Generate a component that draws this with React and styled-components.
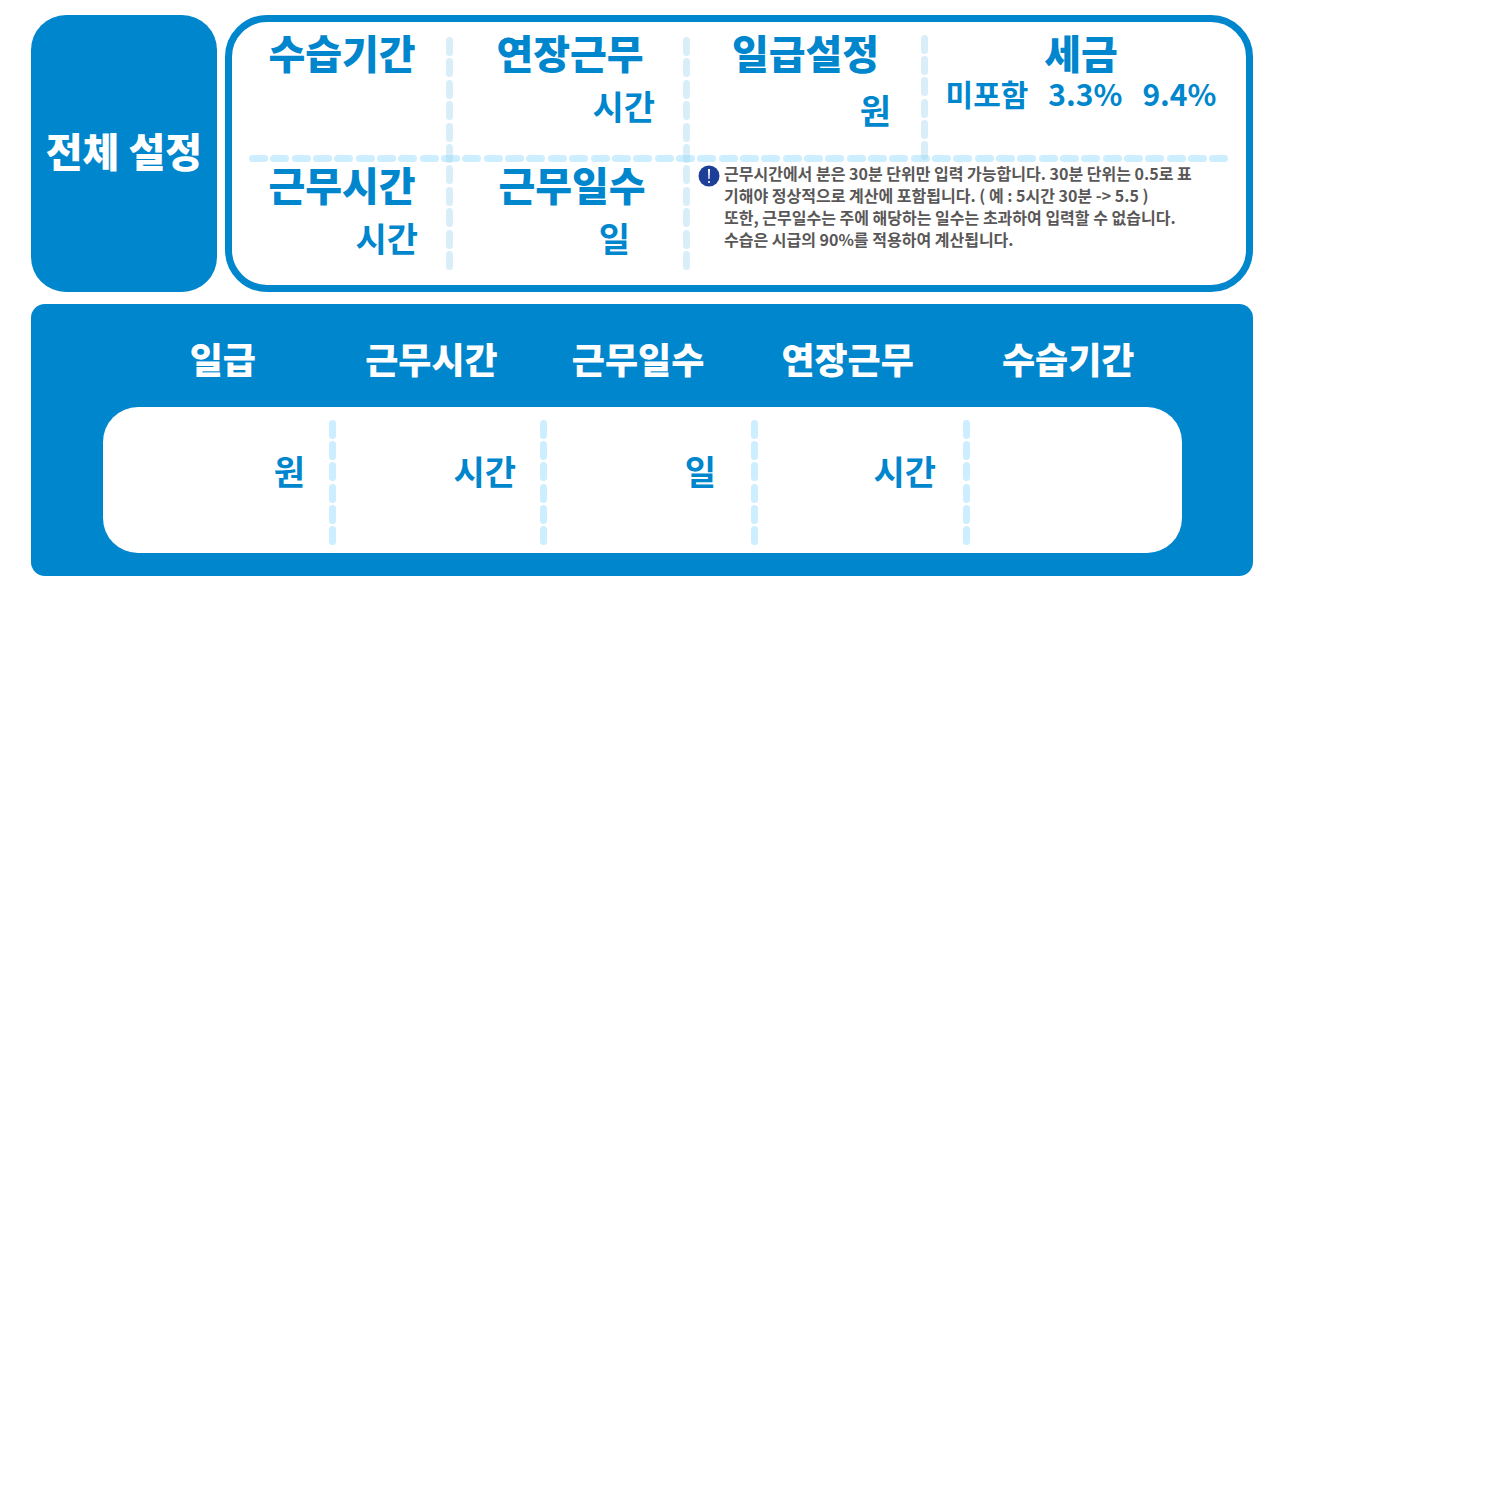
import React from "react";
import styled, { createGlobalStyle } from "styled-components";

const BLUE = "#0086cd";

const GlobalStyle = createGlobalStyle`
  *, *::before, *::after { box-sizing: border-box; }
  body {
    margin: 0;
    background: #fff;
    font-family: "Noto Sans CJK KR", "Noto Sans", sans-serif;
  }
`;

const Page = styled.main`
  display: flex;
  flex-direction: column;
  gap: 12px;
  max-width: 1284px;
  padding: 15px 31px;
`;

const SettingsRow = styled.section`
  display: flex;
  gap: 8px;
`;

const Badge = styled.h1`
  display: flex;
  flex: 0 0 186px;
  align-items: center;
  justify-content: center;
  margin: 0;
  padding-bottom: 8px;
  border-radius: 35px;
  background: ${BLUE};
  color: #fff;
  font-size: 40px;
  font-weight: 900;
  line-height: 44px;
  white-space: nowrap;
`;

const SettingsPanel = styled.div`
  display: grid;
  flex: 1;
  grid-template-columns: 214fr 7px 230fr 7px 231fr 7px 318fr;
  grid-template-rows: 133px 7px 123px;
  border: 7px solid ${BLUE};
  border-radius: 42px;
`;

const Cell = styled.div`
  grid-row: ${(p) => p.$row};
  grid-column: ${(p) => p.$column};
  display: flex;
  flex-direction: column;
  gap: ${(p) => p.$gap ?? 10}px;
  min-width: 0;
  padding: ${(p) => (p.$row === 1 ? 8 : 0)}px ${(p) => p.$right ?? 0}px 0 ${(p) => p.$left ?? 0}px;
`;

const Title = styled.label`
  display: block;
  margin: 0;
  color: ${BLUE};
  font-size: 40px;
  font-weight: 900;
  line-height: 44px;
  text-align: center;
  white-space: nowrap;
`;

const Field = styled.div`
  display: flex;
  align-items: center;
  min-width: 0;
  padding: 0 ${(p) => p.$right}px ${(p) => p.$bottom ?? 0}px 16px;
`;

const Input = styled.input`
  flex: 1;
  width: 0;
  min-width: 0;
  height: 40px;
  padding: 0 8px;
  border: 0;
  outline: 0;
  background: transparent;
  color: ${BLUE};
  font: inherit;
  font-size: 28px;
  text-align: right;
`;

const Unit = styled.span`
  color: ${BLUE};
  font-size: 34px;
  font-weight: 700;
  line-height: 44px;
`;

const Options = styled.div`
  display: flex;
  justify-content: center;
  gap: 20px;
`;

const Option = styled.button`
  padding: 0;
  border: 0;
  background: none;
  color: ${BLUE};
  font: inherit;
  font-size: 30px;
  font-weight: 700;
  line-height: 32px;
  white-space: nowrap;
  cursor: pointer;
`;

const Line = styled.div`
  display: flex;
  flex-direction: ${(p) => (p.$vertical ? "column" : "row")};
  justify-content: space-between;
  grid-row: ${(p) => p.$row};
  grid-column: ${(p) => p.$column};
  margin: ${(p) => p.$margin};
`;

const Dash = styled.span`
  width: ${(p) => (p.$vertical ? 7 : 19)}px;
  height: ${(p) => (p.$vertical ? 19 : 7)}px;
  border-radius: 4px;
  background: ${(p) => (p.$soft ? "rgba(160, 212, 238, 0.4)" : "#cceeff")};
`;

const Note = styled.div`
  grid-row: 3;
  grid-column: 5 / -1;
  display: flex;
  align-items: flex-start;
  gap: 4px;
  padding: 0 16px 0 8px;
`;

const NoteIcon = styled.svg`
  flex: none;
  width: 22px;
  height: 22px;
  margin-top: 3px;
`;

const NoteText = styled.p`
  margin: 0;
  color: #595757;
  font-size: 16px;
  font-weight: 700;
  line-height: 22px;
`;

const NoteLine = styled.span`
  display: block;
  white-space: nowrap;
`;

const ResultPanel = styled.section`
  padding: 32px 71px 23px 72px;
  border-radius: 14px;
  background: ${BLUE};
`;

const ResultHead = styled.div`
  display: grid;
  grid-template-columns: 210fr 208fr 206fr 214fr 228fr;
  padding-left: 15px;
`;

const ResultTitle = styled.label`
  color: #fff;
  font-size: 36px;
  font-weight: 900;
  line-height: 44px;
  text-align: center;
  white-space: nowrap;
`;

const ResultBody = styled.div`
  display: grid;
  grid-template-columns: 226fr 7px 204fr 7px 204fr 7px 205fr 7px 212fr;
  grid-template-rows: 146px;
  margin-top: 27px;
  border-radius: 35px;
  background: #fff;
`;

function DashedLine({ count, vertical, soft, ...place }) {
  return (
    <Line $vertical={vertical} {...place}>
      {Array.from({ length: count }, (_, i) => (
        <Dash key={i} $vertical={vertical} $soft={soft} />
      ))}
    </Line>
  );
}

function Setting({ id, title, unit, row, column, left, right, gap }) {
  return (
    <Cell $row={row} $column={column} $left={left} $gap={gap}>
      <Title htmlFor={id}>{title}</Title>
      <Field $right={right}>
        <Input id={id} inputMode="decimal" />
        {unit && <Unit>{unit}</Unit>}
      </Field>
    </Cell>
  );
}

const RESULTS = [
  { id: "result-pay", title: "일급", unit: "원", right: 24 },
  { id: "result-hours", title: "근무시간", unit: "시간", right: 24 },
  { id: "result-days", title: "근무일수", unit: "일", right: 35 },
  { id: "result-overtime", title: "연장근무", unit: "시간", right: 27 },
  { id: "result-probation", title: "수습기간", right: 24 },
];

const NOTES = [
  "근무시간에서 분은 30분 단위만 입력 가능합니다. 30분 단위는 0.5로 표",
  "기해야 정상적으로 계산에 포함됩니다. ( 예 : 5시간 30분 -> 5.5 )",
  "또한, 근무일수는 주에 해당하는 일수는 초과하여 입력할 수 없습니다.",
  "수습은 시급의 90%를 적용하여 계산됩니다.",
];

export default function App() {
  return (
    <>
      <GlobalStyle />
      <Page>
        <SettingsRow>
          <Badge>전체 설정</Badge>
          <SettingsPanel>
            <DashedLine count={46} $row="2" $column="1 / -1" $margin="0 17px" />
            <DashedLine vertical soft count={11} $row="1 / -1" $column="2" $margin="15px 0" />
            <DashedLine vertical soft count={11} $row="1 / -1" $column="4" $margin="15px 0" />
            <DashedLine vertical soft count={6} $row="1 / 3" $column="6" $margin="13px 0 2px" />

            <Setting id="probation" title="수습기간" row={1} column={1} left={6} right={28} />
            <Setting id="overtime" title="연장근무" unit="시간" row={1} column={3} left={4} right={28} />
            <Setting id="pay" title="일급설정" unit="원" row={1} column={5} right={30} gap={14} />
            <Cell $row={1} $column={7} $right={12} $gap={3}>
              <Title as="h2">세금</Title>
              <Options>
                <Option type="button">미포함</Option>
                <Option type="button">3.3%</Option>
                <Option type="button">9.4%</Option>
              </Options>
            </Cell>
            <Setting id="hours" title="근무시간" unit="시간" row={3} column={1} left={6} right={28} />
            <Setting id="days" title="근무일수" unit="일" row={3} column={3} left={8} right={53} />

            <Note>
              <NoteIcon viewBox="0 0 22 22" aria-hidden="true">
                <circle cx="11" cy="11" r="10.5" fill="#1d3f98" />
                <path d="M10 4h2l-.4 10h-1.2z" fill="#fff" />
                <circle cx="11" cy="17" r="1.1" fill="#fff" />
              </NoteIcon>
              <NoteText>
                {NOTES.map((line) => (
                  <NoteLine key={line}>{line}</NoteLine>
                ))}
              </NoteText>
            </Note>
          </SettingsPanel>
        </SettingsRow>

        <ResultPanel>
          <ResultHead>
            {RESULTS.map((r) => (
              <ResultTitle key={r.id} htmlFor={r.id}>
                {r.title}
              </ResultTitle>
            ))}
          </ResultHead>
          <ResultBody>
            {RESULTS.map((r, i) => (
              <React.Fragment key={r.id}>
                {i > 0 && <DashedLine vertical count={6} $margin="13px 0 8px" />}
                <Field $right={r.right} $bottom={18}>
                  <Input id={r.id} inputMode="decimal" />
                  {r.unit && <Unit>{r.unit}</Unit>}
                </Field>
              </React.Fragment>
            ))}
          </ResultBody>
        </ResultPanel>
      </Page>
    </>
  );
}
